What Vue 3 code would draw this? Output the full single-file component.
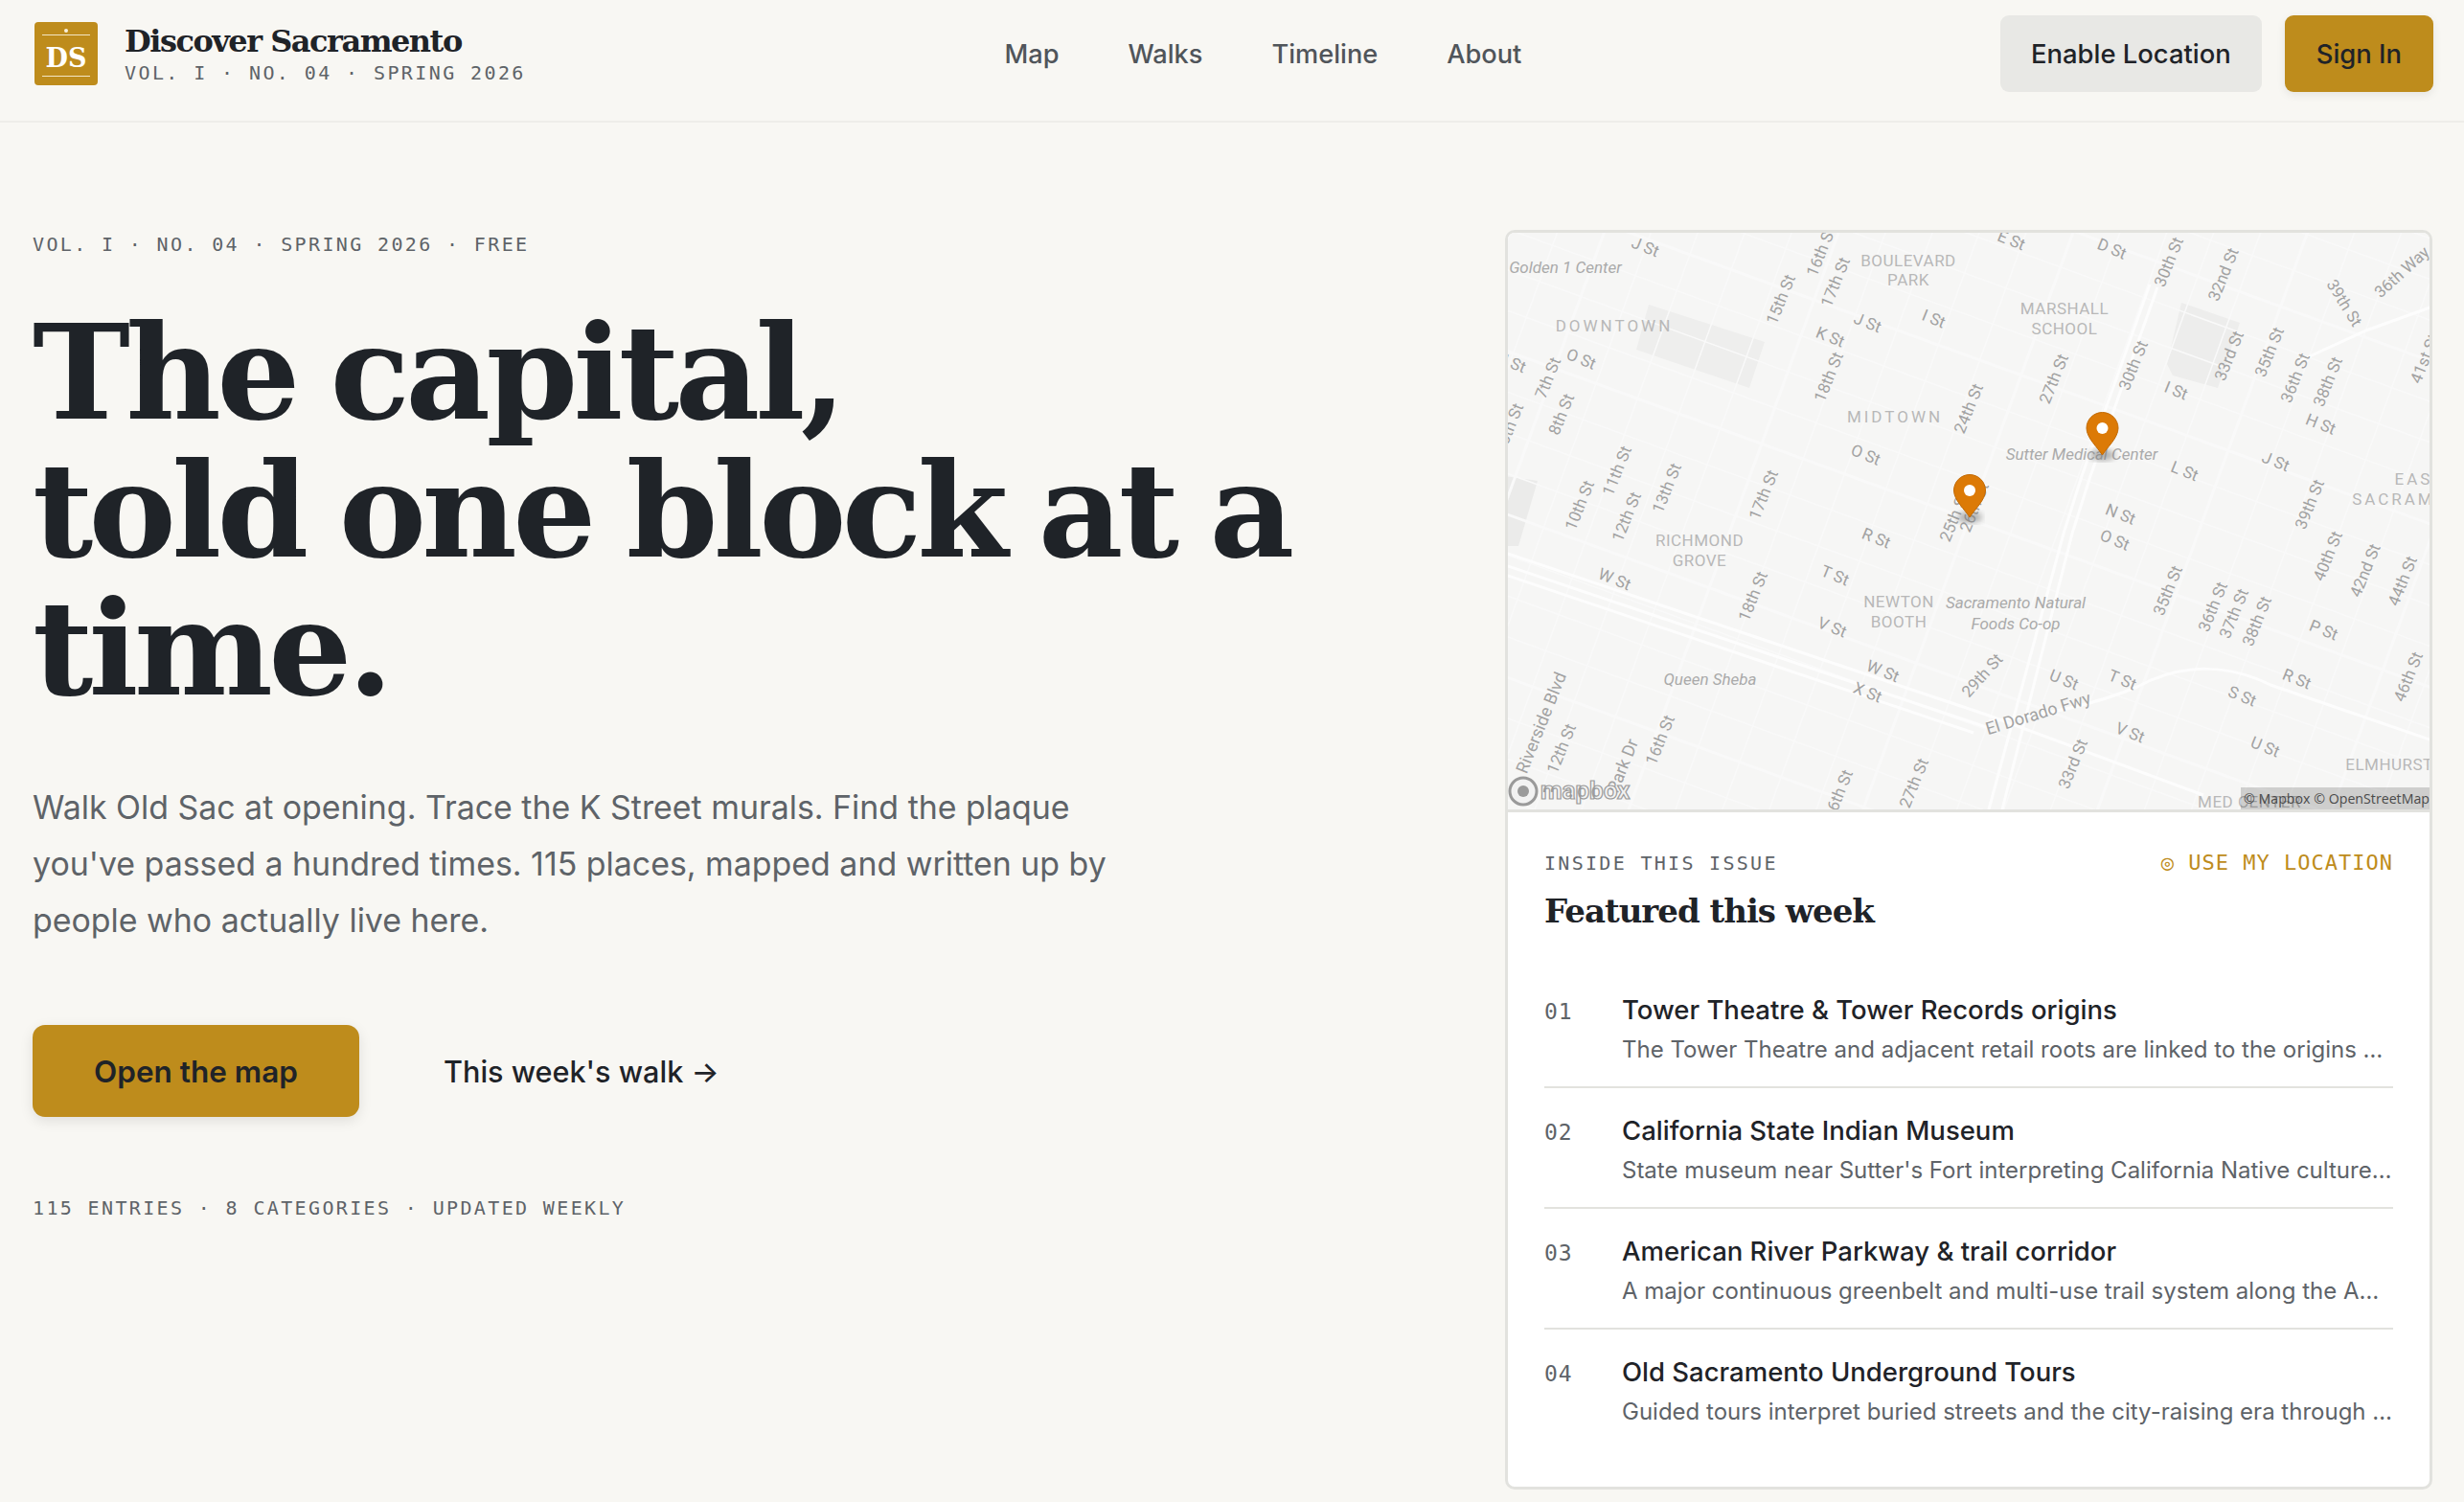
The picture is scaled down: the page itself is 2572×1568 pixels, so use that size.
<template>
  <div class="page">
    <header class="topbar">
      <div class="brand">
        <div class="logo">
          <span class="logo-dot"></span>
          <span class="logo-line"></span>
          <span class="logo-text">DS</span>
          <span class="logo-line"></span>
        </div>
        <div class="brand-copy">
          <div class="brand-name">Discover Sacramento</div>
          <div class="brand-issue">VOL. I · NO. 04 · SPRING 2026</div>
        </div>
      </div>
      <nav class="nav">
        <a v-for="link in links" :key="link" href="#">{{ link }}</a>
      </nav>
      <div class="actions">
        <button class="btn btn-grey">Enable Location</button>
        <button class="btn btn-gold">Sign In</button>
      </div>
    </header>

    <main class="layout">
      <section class="hero">
        <p class="eyebrow">VOL. I · NO. 04 · SPRING 2026 · FREE</p>
        <h1>The capital,<br />told one block at a<br />time.</h1>
        <p class="lede">
          Walk Old Sac at opening. Trace the K Street murals. Find the plaque
          you've passed a hundred times. 115 places, mapped and written up by
          people who actually live here.
        </p>
        <div class="cta-row">
          <a class="cta" href="#">Open the map</a>
          <a class="cta-link" href="#">This week's walk →</a>
        </div>
        <p class="stats">115 ENTRIES · 8 CATEGORIES · UPDATED WEEKLY</p>
      </section>

      <aside class="feature">
        <div class="map">
          <svg class="map-svg" viewBox="1571 240 968 605" width="968" height="605">
            <defs>
              <filter id="pinblur"><feGaussianBlur stdDeviation="3" /></filter>
            </defs>
            <rect x="1571" y="240" width="968" height="605" fill="#f6f6f5" />
            <polygon points="1721,318 1842,357 1826,405 1708,365" fill="#eeeeed" />
            <polygon points="2277,316 2338,337 2315,405 2268,392 2262,380" fill="#ededec" />
            <polygon points="1571,497 1605,502 1585,570 1571,570" fill="#ebebea" />
            <line
              v-for="(r, i) in streets"
              :key="'s' + i"
              :x1="r[0]" :y1="r[1]" :x2="r[2]" :y2="r[3]"
              stroke="#f9f9f9"
              :stroke-width="r[4]"
            />
            <path
              v-for="(d, i) in majorRoads"
              :key="'m' + i"
              :d="d"
              fill="none"
              stroke="#fdfdfd"
              stroke-width="3"
            />
            <text
              v-for="(l, i) in labels"
              :key="'l' + i"
              :class="'lbl-' + (l[4] || 'street')"
              :transform="`translate(${l[1]} ${l[2]}) rotate(${l[3]})`"
              text-anchor="middle"
              dominant-baseline="middle"
            >{{ l[0] }}</text>
            <g v-for="(p, i) in pins" :key="'p' + i" :transform="`translate(${p[0]} ${p[1]})`">
              <ellipse cx="17" cy="45" rx="13" ry="6" fill="#777" opacity="0.55" filter="url(#pinblur)" />
              <path
                d="M0.5 17C0.5 7.9 7.9 0.5 17 0.5S33.5 7.9 33.5 17C33.5 27 22 37 17 45C12 37 0.5 27 0.5 17Z"
                fill="#dc7a06"
                stroke="#c26a05"
              />
              <circle cx="17" cy="17" r="6" fill="#fff" />
            </g>
            <g class="mapbox-mark">
              <circle cx="1590" cy="826" r="14" fill="#f2f2f2" stroke="#9a9a9a" stroke-width="3" />
              <circle cx="1590" cy="826" r="6" fill="#9a9a9a" />
              <text x="1608" y="834" class="mapbox-text">mapbox</text>
            </g>
          </svg>
          <div class="attrib">© Mapbox © OpenStreetMap</div>
        </div>
        <div class="panel">
          <div class="panel-top">
            <span class="panel-kicker">INSIDE THIS ISSUE</span>
            <a class="panel-loc" href="#">◎ USE MY LOCATION</a>
          </div>
          <h2>Featured this week</h2>
          <ol class="list">
            <li v-for="item in featured" :key="item.num" class="row">
              <span class="num">{{ item.num }}</span>
              <div class="row-copy">
                <div class="row-title">{{ item.title }}</div>
                <div class="row-desc">{{ item.desc }}</div>
              </div>
            </li>
          </ol>
        </div>
      </aside>
    </main>
  </div>
</template>

<script setup>
const links = ['Map', 'Walks', 'Timeline', 'About'];

const featured = [
  { num: '01', title: 'Tower Theatre & Tower Records origins', desc: 'The Tower Theatre and adjacent retail roots are linked to the origins of Tower Records in Sacramento.' },
  { num: '02', title: 'California State Indian Museum', desc: "State museum near Sutter's Fort interpreting California Native cultures and histories through exhibits." },
  { num: '03', title: 'American River Parkway & trail corridor', desc: 'A major continuous greenbelt and multi-use trail system along the American River through the region.' },
  { num: '04', title: 'Old Sacramento Underground Tours', desc: 'Guided tours interpret buried streets and the city-raising era through the old waterfront district.' },
];

const pins = [
  [2177.5, 430],
  [2039, 495],
];

// map streets run in two families, about 20deg off the screen axes
const streets = [];
const dirA = [Math.cos(0.349), Math.sin(0.349)];
const dirB = [Math.sin(0.349), -Math.cos(0.349)];
for (let i = -14; i < 26; i++) {
  const cx = 2055 + dirB[0] * i * 40;
  const cy = 542 + dirB[1] * i * 40;
  streets.push([cx - dirA[0] * 900, cy - dirA[1] * 900, cx + dirA[0] * 900, cy + dirA[1] * 900, i % 4 === 0 ? 3 : 1.5]);
}
for (let i = -14; i < 14; i++) {
  const cx = 2055 + dirA[0] * i * 46;
  const cy = 542 + dirA[1] * i * 46;
  streets.push([cx - dirB[0] * 900, cy - dirB[1] * 900, cx + dirB[0] * 900, cy + dirB[1] * 900, i % 5 === 0 ? 3 : 1.5]);
}

const majorRoads = [
  'M1571 577L2076 747L2300 830',
  'M1571 590L2076 760',
  'M1571 600L2060 765',
  'M2076 753C2150 745 2200 730 2231 717C2280 690 2330 695 2370 715L2539 773',
  'M2244 297L2173 497L2154 557L2076 845',
  'M2252 300L2182 497L2163 557L2090 845',
  'M2400 377L2470 345L2539 320',
];

const labels = [
  ['J St', 1717, 259, 22],
  ['Golden 1 Center', 1634, 281, 0, 'poi'],
  ['16th St', 1902, 263, -68],
  ['17th St', 1917, 295, -68],
  ['15th St', 1860, 313, -68],
  ['BOULEVARD', 1992, 274, 0, 'place'],
  ['PARK', 1992, 294, 0, 'place'],
  ['E St', 2099, 252, 22],
  ['D St', 2204, 261, 22],
  ['30th St', 2265, 274, -68],
  ['32nd St', 2322, 287, -68],
  ['36th Way', 2508, 285, -42],
  ['39th St', 2446, 317, 58],
  ['DOWNTOWN', 1685, 342, 0, 'area'],
  ['J St', 1949, 338, 22],
  ['I St', 2018, 334, 22],
  ['K St', 1910, 353, 22],
  ['MARSHALL', 2155, 324, 0, 'place'],
  ['SCHOOL', 2155, 345, 0, 'place'],
  ['30th St', 2228, 382, -68],
  ['27th St', 2145, 396, -68],
  ['24th St', 2056, 427, -68],
  ['18th St', 1910, 394, -68],
  ['I St', 2271, 409, 22],
  ['33rd St', 2328, 372, -68],
  ['35th St', 2370, 368, -68],
  ['36th St', 2397, 395, -68],
  ['38th St', 2431, 399, -68],
  ['41st St', 2532, 375, -68],
  ['J St', 1578, 380, 22],
  ['O St', 1650, 376, 22],
  ['7th St', 1617, 395, -68],
  ['8th St', 1631, 433, -68],
  ['6th St', 1578, 443, -68],
  ['MIDTOWN', 1978, 437, 0, 'area'],
  ['H St', 2422, 444, 22],
  ['O St', 1947, 476, 22],
  ['Sutter Medical Center', 2173, 476, 0, 'poi'],
  ['L St', 2280, 493, 22],
  ['J St', 2375, 483, 22],
  ['EAST', 2526, 502, 0, 'area'],
  ['SACRAMENTO', 2526, 523, 0, 'area'],
  ['39th St', 2412, 527, -68],
  ['11th St', 1689, 492, -68],
  ['10th St', 1650, 528, -68],
  ['13th St', 1741, 510, -68],
  ['12th St', 1699, 540, -68],
  ['17th St', 1842, 517, -68],
  ['N St', 2213, 538, 22],
  ['25th St', 2041, 540, -68],
  ['26th St', 2062, 530, -68],
  ['RICHMOND', 1774, 566, 0, 'place'],
  ['GROVE', 1774, 587, 0, 'place'],
  ['R St', 1958, 563, 22],
  ['O St', 2207, 565, 22],
  ['W St', 1685, 606, 22],
  ['T St', 1915, 602, 22],
  ['18th St', 1831, 623, -68],
  ['40th St', 2431, 581, -68],
  ['42nd St', 2470, 596, -68],
  ['44th St', 2509, 607, -68],
  ['35th St', 2264, 617, -68],
  ['36th St', 2311, 634, -68],
  ['37th St', 2333, 641, -68],
  ['38th St', 2357, 649, -68],
  ['NEWTON', 1982, 630, 0, 'place'],
  ['BOOTH', 1982, 651, 0, 'place'],
  ['Sacramento Natural', 2104, 631, 0, 'poi'],
  ['Foods Co-op', 2104, 653, 0, 'poi'],
  ['V St', 1912, 656, 22],
  ['P St', 2425, 659, 22],
  ['46th St', 2515, 707, -68],
  ['W St', 1965, 702, 22],
  ['X St', 1949, 724, 22],
  ['29th St', 2070, 706, -48],
  ['U St', 2154, 711, 22],
  ['T St', 2215, 711, 22],
  ['R St', 2397, 710, 22],
  ['S St', 2340, 728, 22],
  ['Queen Sheba', 1785, 711, 0, 'poi'],
  ['El Dorado Fwy', 2128, 746, -17, 'road'],
  ['V St', 2223, 766, 22],
  ['U St', 2364, 781, 22],
  ['Riverside Blvd', 1610, 755, -68, 'road'],
  ['12th St', 1631, 782, -68],
  ['Park Dr', 1695, 800, -68, 'road'],
  ['16th St', 1734, 773, -68],
  ['33rd St', 2165, 798, -68],
  ['27th St', 1999, 818, -68],
  ['26th St', 1920, 830, -68],
  ['ELMHURST', 2494, 800, 0, 'place'],
  ['MED CENTER', 2348, 839, 0, 'place'],
];
</script>

<style>
html, body {
  margin: 0;
  background: #f8f7f3;
}
</style>

<style scoped>
.page {
  width: 2572px;
  height: 1568px;
  overflow: hidden;
  background: #f8f7f3;
  color: #1f2328;
  font-family: Inter, "Noto Sans", sans-serif;
}

.topbar {
  display: flex;
  align-items: center;
  justify-content: space-between;
  box-sizing: border-box;
  height: 128px;
  padding: 0 32px 14px 36px;
  border-bottom: 2px solid #eeede9;
}

.brand {
  display: flex;
  align-items: center;
  gap: 28px;
}

.logo {
  width: 66px;
  height: 66px;
  box-sizing: border-box;
  padding: 7px 8px 0;
  border-radius: 4px;
  background: #be8c1c;
  display: flex;
  flex-direction: column;
  align-items: center;
}

.logo-dot {
  width: 4px;
  height: 4px;
  border-radius: 50%;
  background: #f8f0dc;
}

.logo-line {
  width: 100%;
  height: 1px;
  margin-top: 2px;
  background: #f3e6c4;
}

.logo-text {
  font: 700 27px/34px "DejaVu Serif", serif;
  color: #fff;
  margin-top: 7px;
  margin-bottom: -1px;
}

.brand-name {
  font: 700 32px/38px "DejaVu Serif", serif;
  letter-spacing: -1.5px;
}

.brand-issue {
  margin-top: 2px;
  font: 400 20px/24px "DejaVu Sans Mono", monospace;
  letter-spacing: 2.4px;
  color: #5e6368;
}

.nav {
  display: flex;
  gap: 72px;
}

.nav a {
  font-size: 27.2px;
  font-weight: 500;
  color: #50555a;
  text-decoration: none;
}

.actions {
  display: flex;
  gap: 24px;
}

.btn {
  height: 80px;
  padding: 0 32px;
  border: 0;
  border-radius: 9px;
  font-family: inherit;
  font-size: 27.4px;
  font-weight: 500;
  color: #1f2328;
}

.btn-grey {
  background: #e8e8e5;
}

.btn-gold {
  background: #be8c1c;
  padding: 0 33px;
  box-shadow: 0 3px 10px rgba(0, 0, 0, 0.08);
}

.layout {
  display: grid;
  grid-template-columns: 1fr 968px;
  padding: 112px 33px 0 34px;
  column-gap: 120px;
}

.eyebrow {
  margin: 2px 0 0;
  font: 400 20px/26px "DejaVu Sans Mono", monospace;
  letter-spacing: 2.36px;
  color: #5e6368;
}

h1 {
  margin: 49px 0 0;
  font: 700 137px/144px "DejaVu Serif", serif;
  letter-spacing: -4.7px;
  word-spacing: -7px;
  color: #1f2328;
}

.lede {
  width: 1140px;
  margin: 64px 0 0;
  font-size: 33.9px;
  line-height: 59px;
  color: #5e6368;
}

.cta-row {
  display: flex;
  align-items: center;
  gap: 88px;
  margin-top: 80px;
}

.cta {
  display: flex;
  align-items: center;
  justify-content: center;
  width: 341px;
  height: 96px;
  border-radius: 13px;
  background: #be8c1c;
  box-shadow: 0 4px 14px rgba(0, 0, 0, 0.1);
  font-size: 31.5px;
  font-weight: 600;
  color: #1f2328;
  text-decoration: none;
}

.cta-link {
  font-size: 30.6px;
  font-weight: 500;
  color: #1f2328;
  text-decoration: none;
}

.stats {
  margin: 83px 0 0;
  font: 400 20px/24px "DejaVu Sans Mono", monospace;
  letter-spacing: 2.36px;
  color: #5e6368;
}

.feature {
  box-sizing: border-box;
  height: 1315px;
  border: 3px solid #e2e2de;
  border-radius: 10px;
  overflow: hidden;
  background: #fff;
}

.map {
  position: relative;
  height: 605px;
  margin: -3px -3px 0;
  border-bottom: 3px solid #e2e2de;
}

.map-svg {
  display: block;
}

.lbl-street {
  font: 400 17px Roboto, sans-serif;
  fill: #a2a2a2;
}

.lbl-road {
  font: 400 18px Roboto, sans-serif;
  fill: #a2a2a2;
}

.lbl-place {
  font: 400 17px Roboto, sans-serif;
  fill: #b8b8b8;
  letter-spacing: 0.5px;
}

.lbl-area {
  font: 400 17px Roboto, sans-serif;
  fill: #b8b8b8;
  letter-spacing: 3px;
}

.lbl-poi {
  font: italic 400 17px Roboto, sans-serif;
  fill: #aaaaaa;
}

.mapbox-text {
  font: 700 26px Roboto, sans-serif;
  fill: #f2f2f2;
  stroke: #9a9a9a;
  stroke-width: 1.2px;
}

.attrib {
  position: absolute;
  right: 0;
  bottom: 0;
  padding: 0 3px;
  height: 23px;
  background: rgba(0, 0, 0, 0.16);
  font: 400 14.2px/23px "Open Sans", sans-serif;
  color: #4a4a4a;
}

.panel {
  padding: 41px 38px 0;
}

.panel-top {
  display: flex;
  justify-content: space-between;
  align-items: baseline;
}

.panel-kicker {
  font: 400 20px/24px "DejaVu Sans Mono", monospace;
  letter-spacing: 2.3px;
  color: #5e6368;
}

.panel-loc {
  font: 400 22px/24px "DejaVu Sans Mono", monospace;
  letter-spacing: 1px;
  color: #be8c1c;
  text-decoration: none;
}

h2 {
  margin: 14px 0 0;
  font: 700 34px/48px "DejaVu Serif", serif;
  letter-spacing: -1px;
  color: #1f2328;
}

.list {
  margin: 35px 0 0;
  padding: 0;
  list-style: none;
}

.row {
  display: grid;
  grid-template-columns: 81px minmax(0, 1fr);
  height: 126px;
  box-sizing: border-box;
  padding-top: 25px;
  border-bottom: 2px solid #e2e2de;
}

.row:last-child {
  border-bottom: 0;
}

.num {
  font: 400 23px/42px "DejaVu Sans Mono", monospace;
  letter-spacing: 0.8px;
  color: #5e6368;
}

.row-title {
  font-size: 27.5px;
  font-weight: 500;
  line-height: 38px;
}

.row-desc {
  margin-top: 4px;
  font-size: 24px;
  line-height: 38px;
  color: #5e6368;
  white-space: nowrap;
  overflow: hidden;
  text-overflow: ellipsis;
}
</style>
